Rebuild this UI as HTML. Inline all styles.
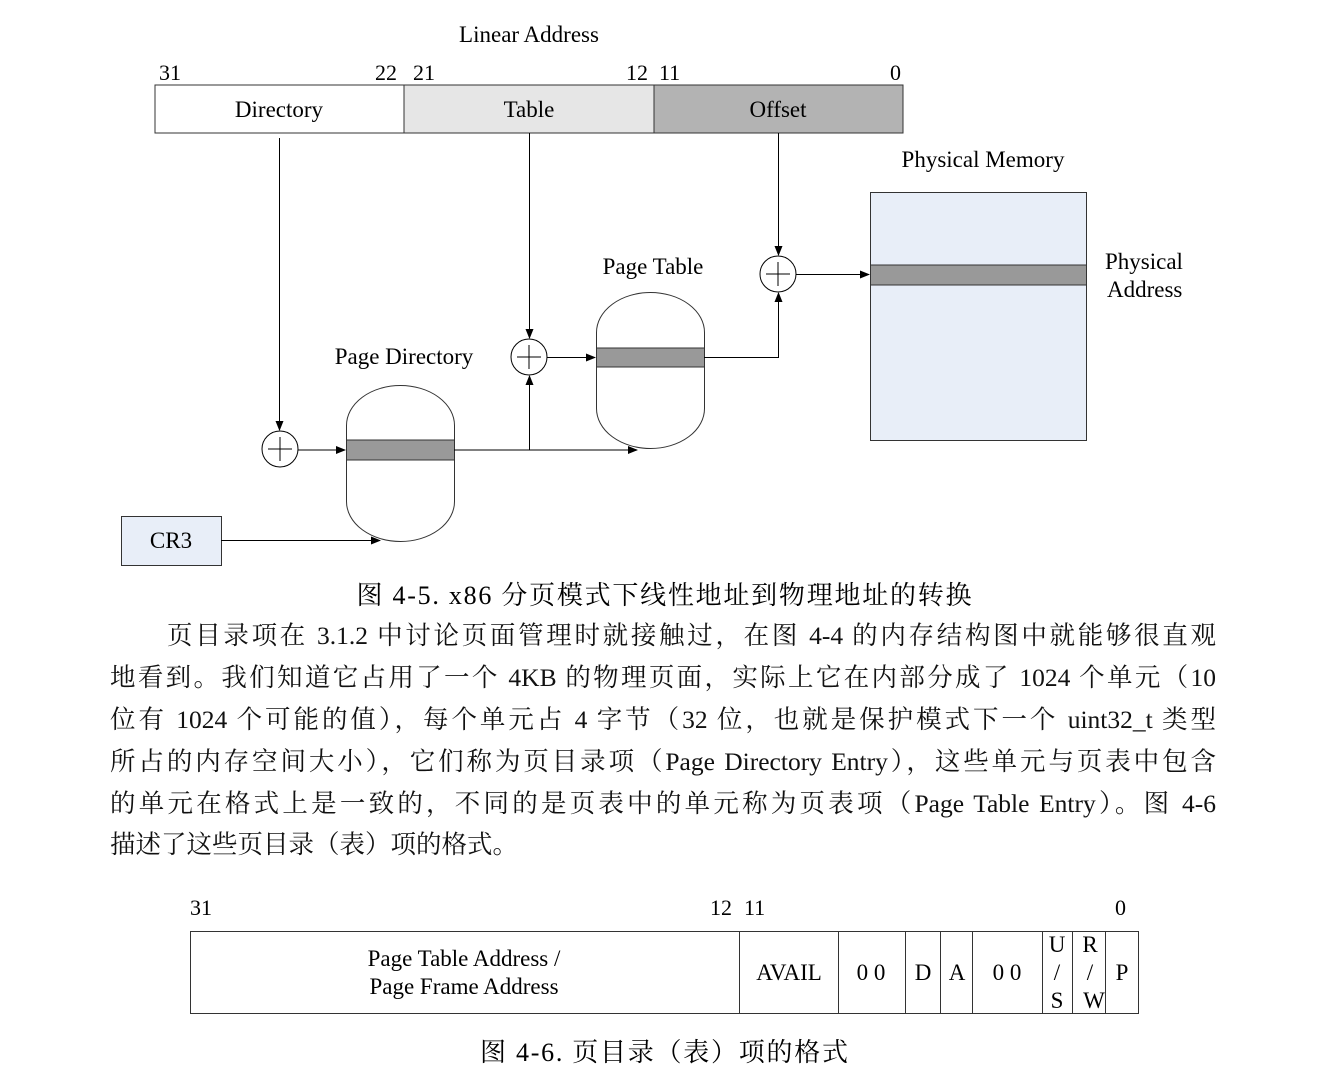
<!DOCTYPE html>
<html><head><meta charset="utf-8"><style>
body{margin:0;width:1332px;height:1068px;background:#fff;overflow:hidden;position:relative;font-family:"Liberation Serif","Noto Serif CJK SC",serif}
svg{position:absolute;left:0;top:0}
.p{position:absolute;left:110px;width:1106px;font-size:25.5px;line-height:41.6px;text-align:justify;text-align-last:justify;color:#111;white-space:nowrap}
</style></head><body>
<svg width="1332" height="1068" font-family="Liberation Serif, Noto Serif CJK SC, serif" fill="#000">
<defs><marker id="a" markerWidth="10" markerHeight="8" refX="9" refY="4" orient="auto" markerUnits="userSpaceOnUse"><path d="M0,0 L10,4 L0,8z" fill="#000"/></marker></defs>
<text x="529" y="42" font-size="23" text-anchor="middle">Linear Address</text>
<g font-size="22"><text x="159" y="80">31</text><text x="375" y="80">22</text><text x="413" y="80">21</text><text x="626" y="80">12</text><text x="659" y="80">11</text><text x="890" y="80">0</text></g>
<rect x="155" y="85" width="249" height="48" fill="#fff" stroke="#333"/>
<rect x="404" y="85" width="250" height="48" fill="#e6e6e6" stroke="#333"/>
<rect x="654" y="85" width="249" height="48" fill="#b3b3b3" stroke="#333"/>
<g font-size="23" text-anchor="middle"><text x="279" y="117">Directory</text><text x="529" y="117">Table</text><text x="778" y="117">Offset</text></g>
<text x="983" y="167" font-size="23" text-anchor="middle">Physical Memory</text>
<rect x="870.5" y="192.5" width="216" height="248" fill="#e8eef8" stroke="#333"/>
<rect x="870.5" y="265" width="216" height="20" fill="#999" stroke="#333"/>
<text x="1105" y="269" font-size="23">Physical</text><text x="1107" y="297" font-size="23">Address</text>
<text x="653" y="274" font-size="23" text-anchor="middle">Page Table</text>
<text x="404" y="364" font-size="23" text-anchor="middle">Page Directory</text>
<rect x="346.5" y="385.5" width="108" height="156" rx="54" ry="40" fill="#fff" stroke="#333"/>
<rect x="346.5" y="440" width="108" height="20" fill="#999" stroke="#333"/>
<rect x="596.5" y="292.5" width="108" height="156" rx="54" ry="40" fill="#fff" stroke="#333"/>
<rect x="596.5" y="348" width="108" height="19" fill="#999" stroke="#333"/>
<rect x="121.5" y="516.5" width="100" height="49" fill="#e8eef8" stroke="#333"/>
<text x="171" y="548" font-size="23" text-anchor="middle">CR3</text>
<g stroke="#000" fill="none" stroke-width="1">
<circle cx="280" cy="449" r="18"/><path d="M268 449h24M280 437v24"/>
<circle cx="529" cy="357" r="18"/><path d="M517 357h24M529 345v24"/>
<circle cx="778" cy="274" r="18"/><path d="M766 274h24M778 262v24"/>
<path d="M279.5 138V430" marker-end="url(#a)"/>
<path d="M529.5 133V338" marker-end="url(#a)"/>
<path d="M778.5 133V255" marker-end="url(#a)"/>
<path d="M298 450H345" marker-end="url(#a)"/>
<path d="M454 450H637" marker-end="url(#a)"/>
<path d="M529.5 450V376" marker-end="url(#a)"/>
<path d="M547 357.5H595" marker-end="url(#a)"/>
<path d="M704 357.5H778.5V293" marker-end="url(#a)"/>
<path d="M796 274.5H869" marker-end="url(#a)"/>
<path d="M221 540.5H380" marker-end="url(#a)"/>
</g>
<text x="664" y="604" font-size="26" text-anchor="middle" textLength="615" lengthAdjust="spacing">图  4-5. x86 分页模式下线性地址到物理地址的转换</text>
<g font-size="22"><text x="190" y="915">31</text><text x="710" y="915">12</text><text x="744" y="915">11</text><text x="1115" y="915">0</text></g>
<g stroke="#333" fill="none"><rect x="190.5" y="931.5" width="948" height="82"/>
<path d="M739.5 931v83M838.5 931v83M905.5 931v83M940.5 931v83M972.5 931v83M1042.5 931v83M1072.5 931v83M1105.5 931v83"/></g>
<g font-size="23" text-anchor="middle">
<text x="464" y="966">Page Table Address /</text><text x="464" y="994">Page Frame Address</text>
<text x="789" y="980">AVAIL</text><text x="871" y="980">0  0</text><text x="923" y="980">D</text><text x="957" y="980">A</text><text x="1007" y="980">0  0</text>
<text x="1057" y="952">U</text><text x="1057" y="980">/</text><text x="1057" y="1008">S</text>
<text x="1090" y="952">R</text><text x="1090" y="980">/</text><text x="1094" y="1008">W</text>
<text x="1122" y="980">P</text></g>
<text x="664" y="1061" font-size="26" text-anchor="middle" textLength="368" lengthAdjust="spacing">图 4-6.  页目录（表）项的格式</text>
</svg>
<div class="p" style="top:615px;left:167px;width:1049px">页目录项在 3.1.2 中讨论页面管理时就接触过，在图 4-4 的内存结构图中就能够很直观</div>
<div class="p" style="top:657px">地看到。我们知道它占用了一个 4KB 的物理页面，实际上它在内部分成了 1024 个单元（10</div>
<div class="p" style="top:699px">位有 1024 个可能的值），每个单元占 4 字节（32 位，也就是保护模式下一个 uint32_t 类型</div>
<div class="p" style="top:741px">所占的内存空间大小），它们称为页目录项（Page Directory Entry），这些单元与页表中包含</div>
<div class="p" style="top:783px">的单元在格式上是一致的，不同的是页表中的单元称为页表项（Page Table Entry）。图 4-6</div>
<div class="p" style="top:824px;text-align-last:left">描述了这些页目录（表）项的格式。</div>
</body></html>
